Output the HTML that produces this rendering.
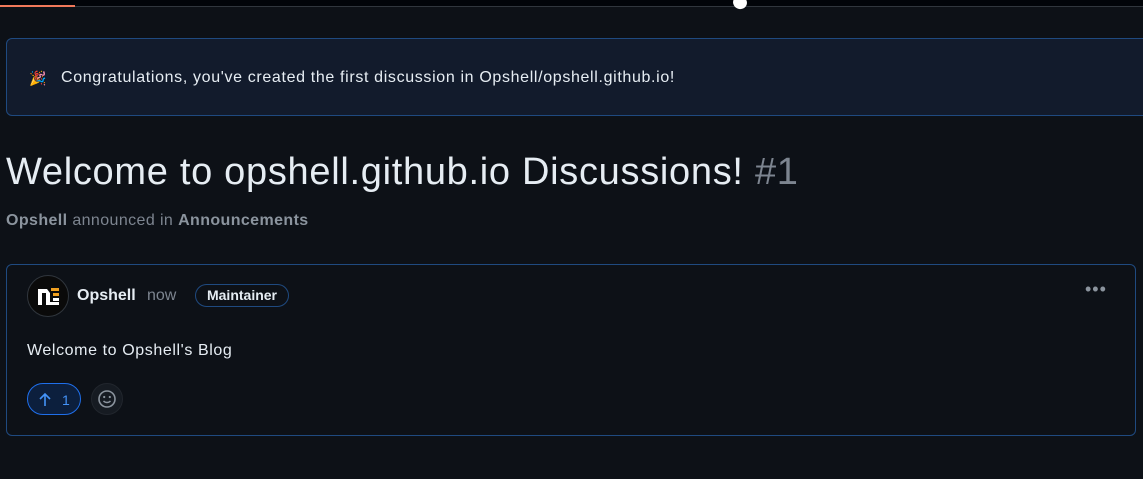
<!DOCTYPE html>
<html><head><meta charset="utf-8"><style>
*{margin:0;padding:0;box-sizing:border-box}
body{width:1143px;height:479px;overflow:hidden;background:#0d1117;font-family:"Liberation Sans",sans-serif;color:#e6edf3;position:relative}
.top{position:absolute;left:0;top:0;width:1143px;height:7px;background:#010409;border-bottom:1px solid #30363d}
.prog{position:absolute;left:0;top:5px;width:75px;height:2px;background:#f0785a}
.blob{position:absolute;left:733px;top:-4px;width:14px;height:13px;background:#fff;border-radius:20% 50% 50% 50%;transform:rotate(20deg)}
.banner{position:absolute;left:6px;top:38px;width:1150px;height:78px;background:#121b2c;border:1px solid #1f4a80;border-radius:6px}
.banner span{position:absolute;left:54px;top:30px;font-size:16px;color:#e6edf3;letter-spacing:0.65px;white-space:nowrap}
.banner i{position:absolute;left:22px;top:31px;font-style:normal;font-size:14px}
h1{position:absolute;left:6px;top:151px;font-size:38px;font-weight:normal;white-space:nowrap;letter-spacing:0.7px}
h1 em{font-style:normal;color:#7d8590}
.sub{position:absolute;left:6px;top:212px;font-size:16px;color:#7d8590;letter-spacing:0.4px}
.sub b{color:#8b949e}
.card{position:absolute;left:6px;top:264px;width:1130px;height:172px;border:1px solid #1f4a80;border-radius:6px}
.av{position:absolute;left:20px;top:10px;width:42px;height:42px;border-radius:50%;background:#0a0a0a;border:1px solid #30363d}
.name{position:absolute;left:70px;top:22px;font-size:16px;font-weight:bold}
.now{position:absolute;left:140px;top:22px;font-size:16px;color:#7d8590}
.badge{position:absolute;left:188px;top:19px;width:94px;height:23px;border:1px solid #1f4a80;border-radius:12px;font-size:14px;font-weight:bold;text-align:center;line-height:21px}
.dots{position:absolute;left:1078px;top:14px;font-size:18px;color:#8b949e;letter-spacing:1px}
.body{position:absolute;left:20px;top:77px;font-size:16px;letter-spacing:0.6px}
.up{position:absolute;left:20px;top:118px;width:54px;height:32px;border:1px solid #1f6feb;background:#0c1f3d;border-radius:16px;color:#4493f8;font-size:14px}
.up svg{position:absolute;left:9px;top:8px}
.up span{position:absolute;left:34px;top:8px}
.emo{position:absolute;left:84px;top:118px;width:32px;height:32px;border-radius:50%;background:#161b22;border:1px solid #21262d}
.emo svg{position:absolute;left:5px;top:5px}
</style></head><body>
<div class="top"></div><div class="prog"></div><div class="blob"></div>
<div class="banner"><i>🎉</i><span>Congratulations, you've created the first discussion in Opshell/opshell.github.io!</span></div>
<h1>Welcome to opshell.github.io Discussions! <em>#1</em></h1>
<div class="sub"><b>Opshell</b> announced in <b>Announcements</b></div>
<div class="card">
<div class="av"><svg width="40" height="40" viewBox="0 0 40 40"><path d="M10 29V13h9l3 4v12h-4V17h-4v12z" fill="#fff"/><rect x="23" y="12" width="8" height="3" fill="#f0a020"/><rect x="25" y="17" width="6" height="3" fill="#f0a020"/><rect x="25" y="22" width="6" height="3" fill="#fff"/><rect x="20" y="26" width="11" height="3" fill="#fff"/></svg></div>
<div class="name">Opshell</div><div class="now">now</div>
<div class="badge">Maintainer</div>
<div class="dots">•••</div>
<div class="body">Welcome to Opshell's Blog</div>
<div class="up"><svg width="16" height="16" viewBox="0 0 16 16"><path d="M8 14V2M3 7l5-5 5 5" stroke="#4493f8" stroke-width="1.6" fill="none"/></svg><span>1</span></div>
<div class="emo"><svg width="20" height="20" viewBox="0 0 20 20"><circle cx="10" cy="10" r="8" stroke="#8b949e" stroke-width="1.6" fill="none"/><circle cx="7.2" cy="8" r="1.1" fill="#8b949e"/><circle cx="12.8" cy="8" r="1.1" fill="#8b949e"/><path d="M6.5 12c2 2 5 2 7 0" stroke="#8b949e" stroke-width="1.5" fill="none"/></svg></div>
</div>
</body></html>
